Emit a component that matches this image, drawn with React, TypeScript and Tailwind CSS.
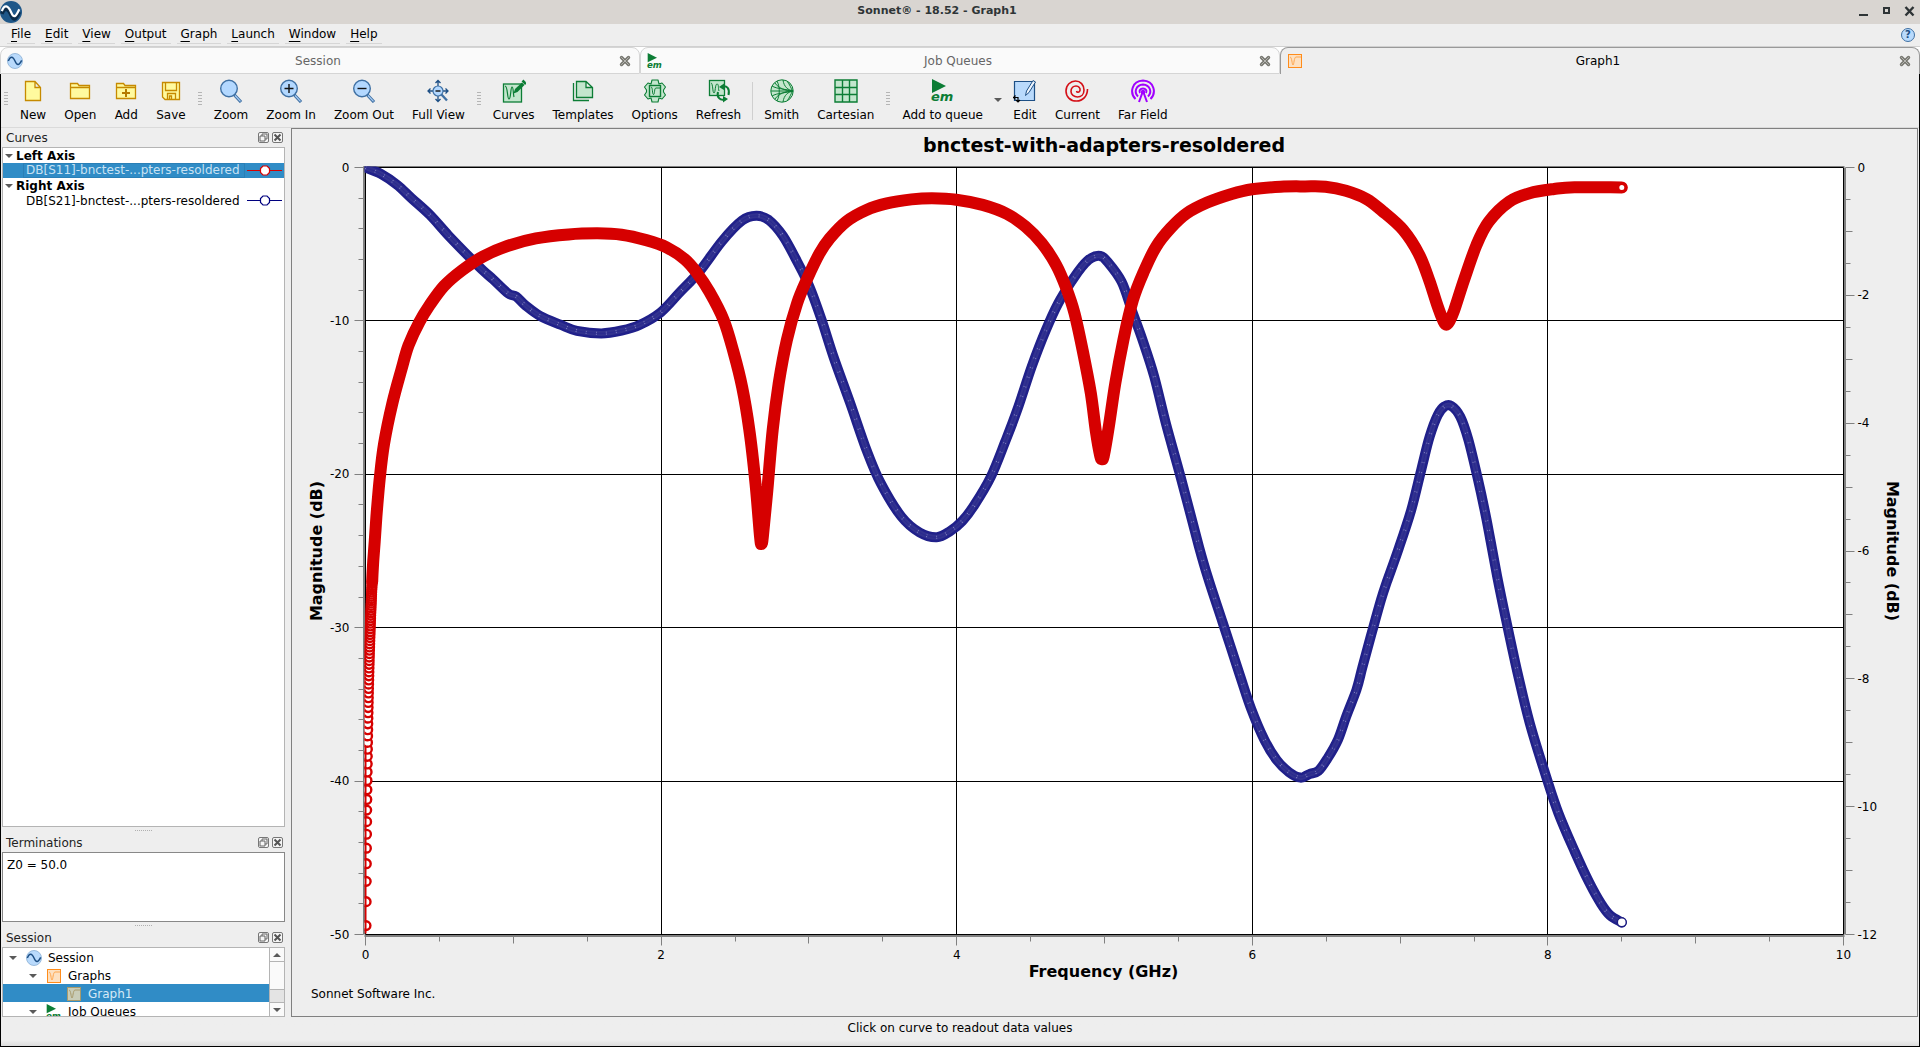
// App.tsx
import React from "react";

type Point = [number, number];

/* ---------- measured data ---------- */

// S11, left axis (GHz, dB)
const S11: Point[] = [
  [0.045, -27.0], [0.053, -25.6], [0.062, -24.4], [0.076, -22.5], [0.096, -20.3], [0.126, -18.0],
  [0.181, -15.4], [0.242, -13.2], [0.291, -11.6], [0.366, -10.05], [0.435, -8.96], [0.532, -7.72],
  [0.656, -6.68], [0.794, -5.81], [0.96, -5.12], [1.153, -4.62], [1.374, -4.36], [1.567, -4.29],
  [1.733, -4.38], [1.899, -4.73], [2.037, -5.2], [2.161, -5.99], [2.244, -6.9], [2.327, -8.1],
  [2.423, -9.94], [2.492, -12.1], [2.548, -14.3], [2.597, -17.1], [2.639, -20.6], [2.67, -24.1],
  [2.679, -24.5], [2.688, -24.1], [2.719, -21], [2.755, -17.1], [2.796, -14.07], [2.851, -11.24],
  [2.92, -8.85], [2.99, -7.22], [3.072, -5.6], [3.141, -4.62], [3.252, -3.53], [3.39, -2.77],
  [3.528, -2.34], [3.694, -2.08], [3.832, -2.01], [3.997, -2.1], [4.176, -2.44], [4.341, -3.03],
  [4.466, -3.86], [4.576, -4.94], [4.673, -6.36], [4.742, -7.88], [4.797, -9.5], [4.852, -11.9],
  [4.907, -14.7], [4.943, -17.3], [4.971, -18.8], [4.983, -19.0], [4.995, -18.8], [5.026, -17.1],
  [5.073, -14.07], [5.128, -11.24], [5.192, -8.64], [5.266, -6.79], [5.349, -5.16], [5.446, -3.97],
  [5.556, -2.99], [5.695, -2.29], [5.86, -1.73], [5.998, -1.42], [6.192, -1.25], [6.357, -1.23],
  [6.495, -1.25], [6.633, -1.51], [6.772, -2.05], [6.88, -2.84], [7.02, -4.07], [7.13, -5.7],
  [7.2, -7.44], [7.255, -9.07], [7.295, -10.05], [7.313, -10.25], [7.332, -10.05], [7.366, -9.3],
  [7.434, -7.3], [7.517, -5.05], [7.6, -3.53], [7.738, -2.23], [7.876, -1.68], [8.042, -1.4],
  [8.18, -1.29], [8.5, -1.3],
];

// S21, right axis (GHz, dB)
const S21: Point[] = [
  [0, 0], [0.104, -0.1], [0.214, -0.27], [0.311, -0.48], [0.435, -0.74], [0.56, -1.06],
  [0.711, -1.42], [0.794, -1.61], [0.863, -1.75], [0.965, -1.97], [1.02, -2.02], [1.084, -2.16],
  [1.18, -2.32], [1.319, -2.46], [1.43, -2.555], [1.595, -2.595], [1.733, -2.55], [1.857, -2.46],
  [1.995, -2.27], [2.12, -1.97], [2.258, -1.63], [2.41, -1.16], [2.548, -0.83], [2.644, -0.755],
  [2.727, -0.82], [2.824, -1.07], [2.92, -1.47], [3.003, -1.86], [3.086, -2.385], [3.169, -2.98],
  [3.28, -3.69], [3.39, -4.42], [3.486, -4.94], [3.625, -5.46], [3.749, -5.71], [3.865, -5.785],
  [3.955, -5.69], [4.038, -5.53], [4.12, -5.28], [4.231, -4.84], [4.328, -4.29], [4.41, -3.79],
  [4.507, -3.12], [4.604, -2.54], [4.687, -2.125], [4.783, -1.76], [4.852, -1.54], [4.907, -1.42],
  [4.971, -1.385], [5.018, -1.47], [5.115, -1.785], [5.184, -2.23], [5.253, -2.67], [5.336, -3.27],
  [5.418, -4.03], [5.515, -4.84], [5.639, -5.93], [5.7, -6.42], [5.8, -7.12], [5.917, -7.95],
  [5.994, -8.48], [6.083, -8.96], [6.165, -9.27], [6.248, -9.46], [6.326, -9.546], [6.386, -9.49],
  [6.447, -9.44], [6.51, -9.24], [6.58, -8.95], [6.635, -8.59], [6.704, -8.175], [6.745, -7.82],
  [6.801, -7.34], [6.87, -6.77], [6.911, -6.48], [6.992, -5.95], [7.075, -5.36], [7.144, -4.72],
  [7.2, -4.21], [7.255, -3.87], [7.3, -3.74], [7.346, -3.73], [7.407, -3.9], [7.462, -4.26],
  [7.523, -4.84], [7.572, -5.36], [7.61, -5.82], [7.657, -6.4], [7.717, -7.08], [7.795, -7.91],
  [7.878, -8.7], [7.988, -9.53], [8.071, -10.1], [8.181, -10.7], [8.278, -11.18], [8.36, -11.52],
  [8.42, -11.7], [8.499, -11.81],
];

/* ---------- chart geometry ---------- */

const PLOT_W = 1478;
const PLOT_H = 767;
const px = (f: number) => (f / 10) * PLOT_W;
const yLeft = (db: number) => (-db / 50) * PLOT_H;
const yRight = (db: number) => (-db / 12) * PLOT_H;

// Catmull-Rom through the samples
function smooth(points: Point[], y: (db: number) => number) {
  const p = points.map(([f, db]) => [px(f), y(db)]);
  let d = `M${p[0][0].toFixed(1)} ${p[0][1].toFixed(1)}`;
  for (let i = 0; i < p.length - 1; i++) {
    const a = p[i - 1] ?? p[i];
    const b = p[i];
    const c = p[i + 1];
    const e = p[i + 2] ?? c;
    const pts = [
      b[0] + (c[0] - a[0]) / 6, b[1] + (c[1] - a[1]) / 6,
      c[0] - (e[0] - b[0]) / 6, c[1] - (e[1] - b[1]) / 6,
      c[0], c[1],
    ];
    d += "C" + pts.map((n) => n.toFixed(1)).join(" ");
  }
  return d;
}

const range = (n: number) => Array.from({ length: n }, (_, i) => i);

const LOW_SAMPLES: Point[] = range(63)
  .map((i) => 0.0034 + i * 0.00067)
  .map((f) => [f, 20 * Math.log10(f) - 0.05]);

function Chart() {
  const s11 = smooth(S11, yLeft);
  const s21 = smooth(S21, yRight);
  return (
    <svg viewBox="0 0 1625 887" className="block h-full w-full" role="img" aria-label="S-parameter graph"
      fontFamily="'DejaVu Sans', sans-serif" fontSize="12">
      <text x="812" y="23" textAnchor="middle" fontWeight="bold" fontSize="19">bnctest-with-adapters-resoldered</text>
      <text x="19" y="869">Sonnet Software Inc.</text>
      <g transform="translate(73.5 38.5)">
        <clipPath id="plot"><rect x="-1" y="-1" width={PLOT_W + 1} height={PLOT_H} /></clipPath>
        <rect width={PLOT_W} height={PLOT_H} fill="#fff" />
        {/* grid */}
        <g stroke="#000">
          {range(6).map((i) => <path key={`v${i}`} d={`M${Math.round(px(i * 2))} 0V${PLOT_H}`} />)}
          {range(6).map((i) => <path key={`h${i}`} d={`M0 ${Math.round(yLeft(-i * 10))}H${PLOT_W}`} />)}
        </g>
        {/* axis lines */}
        <g stroke="#808080" fill="none">
          <path d={`M-1.5 -1V${PLOT_H}`} strokeWidth="2" />
          <path d={`M-2 -1H${PLOT_W + 1}`} />
          <path d={`M${PLOT_W + 1.5} 0V${PLOT_H}`} strokeWidth="2" />
          <path d={`M-1 ${PLOT_H + 1.5}H${PLOT_W + 1}`} strokeWidth="2" />
          {range(26).map((i) => (
            <path key={`l${i}`} d={`M-2 ${Math.round(yLeft(-i * 2))}H${i % 5 ? -7 : -11}`} />
          ))}
          {range(25).map((i) => (
            <path key={`r${i}`} d={`M${PLOT_W + 2} ${Math.round(yRight(-i / 2))}h${i % 4 === 0 ? 9 : i % 2 === 0 ? 7 : 5}`} />
          ))}
          {range(21).map((i) => (
            <path key={`b${i}`} d={`M${Math.round(px(i / 2))} ${PLOT_H + 2}v${i % 4 === 0 ? 9 : i % 2 === 0 ? 7 : 5}`} />
          ))}
        </g>
        {/* tick labels */}
        {range(6).map((i) => (
          <text key={i} x="-16" y={yLeft(-i * 10) + 4} textAnchor="end">{i ? -i * 10 : 0}</text>
        ))}
        {range(7).map((i) => (
          <text key={i} x={PLOT_W + 14} y={yRight(-i * 2) + 4}>{i ? -i * 2 : 0}</text>
        ))}
        {range(6).map((i) => (
          <text key={i} x={px(i * 2)} y={PLOT_H + 24} textAnchor="middle">{i * 2}</text>
        ))}
        <g fontWeight="bold" fontSize="16" textAnchor="middle">
          <text x={PLOT_W / 2 - 1} y={PLOT_H + 42}>Frequency (GHz)</text>
          <text transform={`translate(-44 ${PLOT_H / 2}) rotate(-90)`}>Magnitude (dB)</text>
          <text transform={`translate(${PLOT_W + 43} ${PLOT_H / 2}) rotate(90)`}>Magnitude (dB)</text>
        </g>
        {/* curves */}
        <g clipPath="url(#plot)" fill="none" strokeLinejoin="round" strokeLinecap="round">
          <path d={s21} stroke="#20208a" strokeWidth="10" />
          <path d={s21} stroke="#32328f" strokeWidth="5" />
          <path d={s21} stroke="#7f7fc0" strokeWidth="3" strokeDasharray="1 9" strokeLinecap="butt" />
          <path d={s21} stroke="#2a2a8e" />
          <g stroke="#d60000" strokeWidth="2" fill="#fff">
            {LOW_SAMPLES.map(([f, db]) => (
              <circle key={f} cx={px(f)} cy={yLeft(db)} r="4.4" strokeWidth="2.4" />
            ))}
            <path d={`M0 ${PLOT_H}V580`} />
          </g>
          <path d={s11} stroke="#d60000" strokeWidth="12" />
        </g>
        <circle cx={px(8.5)} cy={yLeft(-1.3)} r="4" fill="#fff" stroke="#d60000" strokeWidth="3" />
        <circle cx={px(8.5)} cy={yRight(-11.81)} r="4.5" fill="#fff" stroke="#1c1c82" strokeWidth="1.5" />
      </g>
    </svg>
  );
}

/* ---------- icons ---------- */

function Svg({ children, className = "size-6", box = 24 }: { children: React.ReactNode; className?: string; box?: number }) {
  return (
    <svg viewBox={`0 0 ${box} ${box}`} className={`${className} shrink-0`} fill="none" aria-hidden>
      {children}
    </svg>
  );
}

const GREEN = "#0c7d35";
const MINT = "#c3e6cd";

const LogoIcon = () => (
  <Svg className="size-[22px]">
    <circle cx="12" cy="12" r="12" fill="#1f5788" />
    <path d="M2 14C5 6 9 8 12 15S17 21 21 12" stroke="#0c2b48" strokeWidth="4" />
    <path d="M2 11C5 3 9 5 12 12S17 18 21 9" stroke="#fff" strokeWidth="2.4" />
  </Svg>
);
const SessionIcon = () => (
  <Svg className="size-4">
    <circle cx="12" cy="12" r="11.3" fill="#b9dafc" stroke="#7aa3cc" />
    <path d="M2 12C5 4 9 5 12 12S18 19 22 11" stroke="#1d4f85" strokeWidth="2.2" />
  </Svg>
);
const GraphIcon = ({ muted = false }: { muted?: boolean }) => (
  <Svg className="size-4" box={16}>
    <rect x="1.5" y="1.5" width="13" height="13" fill={muted ? "#c9cdb8" : "#fde0c0"} stroke={muted ? "#a89a6b" : "#ff8c1a"} />
    <path d="M3 4C5 4 5 12 6 12S7 4 9 4H14" stroke={muted ? "#a89a6b" : "#ffa64d"} />
  </Svg>
);
const EmIcon = ({ className = "size-4" }: { className?: string }) => (
  <Svg className={`${className} overflow-visible`}>
    <path d="M1 0L15 7L1 14Z" fill={GREEN} />
    <text x="0" y="22" fontFamily="'DejaVu Sans', sans-serif" fontStyle="italic" fontWeight="bold" fontSize="13" fill={GREEN}>em</text>
  </Svg>
);
const NewIcon = () => (
  <Svg><path d="M4.5 2.5H14L19.5 8.5V21.5H4.5ZM14 2.5V8.5H19.5" fill="#fffa9e" stroke="#c68a00" strokeWidth="1.3" /></Svg>
);
const Folder = ({ plus = false }: { plus?: boolean }) => (
  <Svg>
    <path d="M2.5 19.5V4.5H9.5L11 6.5H21.5V19.5ZM2.5 8.5H21.5" fill="#fffa9e" stroke="#c68a00" strokeWidth="1.3" />
    {plus && <path d="M12 10V18M8 14H16" stroke="#b57b00" strokeWidth="2" />}
  </Svg>
);
const SaveIcon = () => (
  <Svg>
    <path d="M3.5 3.5H20.5V20.5H6L3.5 18Z" fill="#fffa9e" stroke="#c68a00" strokeWidth="1.3" />
    <path d="M6.5 3.5V11.5H17.5V3.5M8.5 20.5V14.5H16.5V20.5M10.5 20V17H12.5V20" stroke="#c68a00" strokeWidth="1.3" />
  </Svg>
);
const Lens = ({ sign = "" }: { sign?: string }) => (
  <Svg>
    <path d="M15 15.5L22 23" stroke="#3f70a3" strokeWidth="3.2" />
    <path d="M16 16.5L21.5 22.3" stroke="#a9cdf5" strokeWidth="1.2" />
    <circle cx="10" cy="9.5" r="8.3" fill="#b3d8ff" stroke="#3f70a3" strokeWidth="1.4" />
    {sign && <path d={sign} stroke="#111" strokeWidth="1.4" />}
  </Svg>
);
const FullViewIcon = () => (
  <Svg>
    <path d="M12 7V1.5M9.5 4L12 1.5L14.5 4M12 17V22.5M9.5 20L12 22.5L14.5 20M7 12H2M4.5 9.5L2 12L4.5 14.5M17 12H22M19.5 9.5L22 12L19.5 14.5" stroke="#1d4f85" strokeWidth="1.3" />
    <path d="M15 15L21 21.5" stroke="#3f70a3" strokeWidth="2.4" />
    <circle cx="12" cy="12" r="5" fill="#b3d8ff" stroke="#3f70a3" strokeWidth="1.2" />
    <path d="M9.5 12H14.5" stroke="#111" strokeWidth="1.4" />
  </Svg>
);
const CurvesIcon = () => (
  <Svg>
    <rect x="1.5" y="5" width="18" height="18" fill={MINT} stroke={GREEN} strokeWidth="1.3" />
    <path d="M3 7C6 7 5 20 7 20S8.5 8 10 8S11 14 12 18" stroke={GREEN} strokeWidth="1.2" />
    <path d="M11.5 14.5L13 10L20 3.5L22.5 6L15.5 13Z" fill={GREEN} />
    <path d="M20.5 1.5L24 5" stroke={GREEN} strokeWidth="2.6" />
  </Svg>
);
const TemplatesIcon = () => (
  <Svg>
    <path d="M2.5 4V21.5H18" stroke={GREEN} strokeWidth="1.3" />
    <path d="M5.5 2.5H15L21.5 8.5V18.5H5.5ZM15 2.5V8.5H21.5" fill={MINT} stroke={GREEN} strokeWidth="1.3" />
  </Svg>
);
const OptionsIcon = () => (
  <Svg>
    <path d="M9 1H15L16 5L19 4L22.5 8L20.5 11V13L22.5 16L19 20L16 19L15 23H9L8 19L5 20L1.5 16L3.5 13V11L1.5 8L5 4L8 5Z" fill={MINT} stroke={GREEN} strokeLinejoin="round" strokeWidth="1.1" />
    <rect x="6.5" y="6.5" width="11" height="11" stroke={GREEN} strokeWidth="1.4" />
    <path d="M8 8C10 8 9 15.5 10.5 15.5S11 9 13 9H17" stroke={GREEN} />
  </Svg>
);
const RefreshIcon = () => (
  <Svg>
    <rect x="2.5" y="1.5" width="15" height="15" fill={MINT} stroke={GREEN} strokeWidth="1.3" />
    <path d="M4 4C6 4 5.5 14 7 14S8 5 10 5S11 9 12 12" stroke={GREEN} />
    <path d="M15 7.5C20 6 23 10 21.5 16" stroke={GREEN} strokeWidth="2" />
    <path d="M12 8L17 4.5V11Z" fill={GREEN} />
    <path d="M18 20.5C13 22 9.5 18 11 13" stroke={GREEN} strokeWidth="2" />
    <path d="M21 20L16 17V23.5Z" fill={GREEN} />
  </Svg>
);
const SmithIcon = () => (
  <Svg>
    <circle cx="12" cy="12" r="11.2" fill={MINT} stroke={GREEN} />
    <path d="M1 12H23M23 12C18 11 14 8 13 1M23 12C16 12 8 9 5 4M23 12C18 13 14 16 13 23M23 12C16 12 8 15 5 20M23 12C15 10 7 10 2 7M23 12C15 14 7 14 2 17M7 2C10 8 10 16 7 22M17 2C20 6 21 9 22 11M17 22C20 18 21 15 22 13" stroke={GREEN} />
  </Svg>
);
const CartesianIcon = () => (
  <Svg>
    <rect x="1" y="1" width="22" height="22" fill={MINT} />
    <path d="M1 1H23V23H1ZM8.5 1V23M15.5 1V23M1 8.5H23M1 15.5H23" stroke={GREEN} strokeWidth="1.4" />
  </Svg>
);
const EditIcon = () => (
  <Svg>
    <path d="M1.5 2.5H21.5V21.5H1.5Z" fill="#b9dafc" stroke="#1d4f85" strokeWidth="1.2" />
    <path d="M12.5 16.5L13.5 12L20 1.5L22.5 3L16 13.5Z" fill="#eef5fd" stroke="#1d4f85" />
    <path d="M0 18.5H5V23M2.5 16.5L0.5 18.5L2.5 20.5M3 21L5 23L7 21" stroke="#000" strokeWidth="1.2" />
  </Svg>
);
const CurrentIcon = () => (
  <Svg>
    <path d="M22.5 10C22.5 17 18 22 11.5 22C5 22 1 17.5 1 12C1 6 5.5 2 10.5 2C15.5 2 19 6 19 11C19 15.5 16 18 12.5 18C9 18 6 15.5 6 12.5C6 9 8.5 7 11 7C14 7 15.5 9.5 15 11.5C14.5 13.5 12 14 11.5 12" stroke="#d40f17" strokeWidth="1.6" />
  </Svg>
);
const FarFieldIcon = () => (
  <Svg>
    <g stroke="#a100ff" strokeWidth="2">
      <path d="M4.5 20C-1.5 14 0.5 2 12 1.5C23.5 2 25.5 14 19.5 20" />
      <path d="M7 17.5C2.5 13 5 6 12 5.5C19 6 21.5 13 17 17.5" />
      <path d="M9 14C7.5 11.5 9.5 9.5 12 9.5S16.5 11.5 15 14" />
      <path d="M12 12L8 23M12 12L16 23" />
    </g>
    <circle cx="12" cy="13" r="2.2" fill="#a100ff" />
  </Svg>
);

const Arrow = ({ up = false }: { up?: boolean }) => (
  <svg viewBox="0 0 8 4" className="h-1 w-2 shrink-0" aria-hidden>
    <path d={up ? "M0 4H8L4 0Z" : "M0 0H8L4 4Z"} fill="#5a5a5a" />
  </svg>
);

const CloseGlyph = () => (
  <svg viewBox="0 0 12 12" className="size-3" aria-hidden>
    <path d="M2.5 2.5L9.5 9.5M9.5 2.5L2.5 9.5" stroke="#777770" strokeWidth="3.4" strokeLinecap="round" />
    <path d="M2.5 2.5L9.5 9.5M9.5 2.5L2.5 9.5" stroke="#b5b5b0" strokeLinecap="round" />
  </svg>
);

/* ---------- window chrome ---------- */

function TitleBar() {
  return (
    <header className="flex h-6 items-center bg-[#d9d5d1]">
      <LogoIcon />
      <h1 className="flex-1 pb-0.5 text-center text-[11px] font-bold text-[#2e3436]">Sonnet® - 18.52 - Graph1</h1>
      <div className="flex w-[68px] items-center justify-end gap-3 pr-[5px] pb-px">
        <button aria-label="Minimize"><Svg className="size-[11px]" box={11}><path d="M1 9H10" stroke="#2e3436" strokeWidth="2" /></Svg></button>
        <button aria-label="Maximize"><Svg className="size-[11px]" box={11}><path d="M3 2H8V7H3Z" stroke="#2e3436" strokeWidth="2" /></Svg></button>
        <button aria-label="Close"><Svg className="size-[11px]" box={11}><path d="M1.5 1L9.5 9.5M9.5 1L1.5 9.5" stroke="#2e3436" strokeWidth="2.4" /></Svg></button>
      </div>
    </header>
  );
}

const MENUS = ["File", "Edit", "View", "Output", "Graph", "Launch", "Window", "Help"];

function MenuBar() {
  return (
    <nav className="flex h-[23px] items-start gap-1.5 border-b border-[#d0d0d0] pl-[7px] pr-[5px]">
      {MENUS.map((m) => (
        <button key={m} className="h-5 border-b border-[#d6d6d6] px-1">
          <span className="underline underline-offset-[3px]">{m[0]}</span>{m.slice(1)}
        </button>
      ))}
      <button aria-label="Help" className="ml-auto mt-1 grid size-3.5 place-items-center rounded-full border border-[#3f70a3] bg-[#b9dafc] text-[10px] font-bold leading-none text-[#1d4f85]">?</button>
    </nav>
  );
}

function Tab({ icon, title, active = false }: { icon: React.ReactNode; title: string; active?: boolean }) {
  return (
    <div className={`flex flex-1 items-center rounded-t-lg border-x border-t pl-1.5 pr-2 ${
      active ? "border-[#999] bg-[#eee] text-black" : "border-b border-[#d5d5d5] bg-[#fafafa] text-[#666]"
    }`}>
      {icon}
      <button role="tab" aria-selected={active} className="flex-1">{title}</button>
      <button aria-label={`Close ${title}`} className="ml-1.5"><CloseGlyph /></button>
    </div>
  );
}

const Handle = () => (
  <div className="mx-[3px] mt-[17px] h-4 w-1 shrink-0 bg-[radial-gradient(circle,#b5b5b5_40%,transparent_60%)] bg-[length:2px_3px]" />
);

function Tool({ icon, label }: { icon: React.ReactNode; label: string }) {
  return (
    <button className="flex flex-col items-center gap-1 whitespace-nowrap px-[9px] pt-[5px]">
      {icon}
      <span className="leading-4">{label}</span>
    </button>
  );
}

function ToolBar() {
  return (
    <div className="flex h-[54px] items-start overflow-hidden border-b border-[#dadada]" role="toolbar">
      <Handle />
      <Tool icon={<NewIcon />} label="New" />
      <Tool icon={<Folder />} label="Open" />
      <Tool icon={<Folder plus />} label="Add" />
      <Tool icon={<SaveIcon />} label="Save" />
      <Handle />
      <Tool icon={<Lens />} label="Zoom" />
      <Tool icon={<Lens sign="M10 5V14M5.5 9.5H14.5" />} label="Zoom In" />
      <Tool icon={<Lens sign="M5.5 9.5H14.5" />} label="Zoom Out" />
      <Tool icon={<FullViewIcon />} label="Full View" />
      <Handle />
      <Tool icon={<CurvesIcon />} label="Curves" />
      <Tool icon={<TemplatesIcon />} label="Templates" />
      <Tool icon={<OptionsIcon />} label="Options" />
      <Tool icon={<RefreshIcon />} label="Refresh" />
      <div className="mx-0.5 mt-2 h-[38px] w-px bg-[#cfcfcf]" />
      <Tool icon={<SmithIcon />} label="Smith" />
      <Tool icon={<CartesianIcon />} label="Cartesian" />
      <Handle />
      <Tool icon={<EmIcon className="size-6" />} label="Add to queue" />
      <button aria-label="Queue options" className="mx-0.5 mt-6"><Arrow /></button>
      <Tool icon={<EditIcon />} label="Edit" />
      <Tool icon={<CurrentIcon />} label="Current" />
      <Tool icon={<FarFieldIcon />} label="Far Field" />
    </div>
  );
}

/* ---------- docks ---------- */

function DockHeader({ title }: { title: string }) {
  const box = "grid size-[11px] place-items-center rounded-[2px] border border-[#777] bg-[#f6f6f6]";
  return (
    <div className="flex h-[19px] items-center gap-[3px] pl-1 pr-0.5 text-[#222]">
      <h2 className="flex-1">{title}</h2>
      <button className={box} aria-label={`Float ${title}`}>
        <Svg className="size-[9px]" box={9}><path d="M1 3H6V8H1ZM3 3V1H8V6H6" stroke="#666" /></Svg>
      </button>
      <button className={box} aria-label={`Close ${title}`}>
        <Svg className="size-[9px]" box={9}><path d="M1.5 1.5L7.5 7.5M7.5 1.5L1.5 7.5" stroke="#555" strokeWidth="2" /></Svg>
      </button>
    </div>
  );
}

const Splitter = () => (
  <div className="flex h-1.5 items-center justify-center">
    <div className="w-[17px] border-t border-dotted border-[#b0b0b0]" />
  </div>
);

const CurveSwatch = ({ color }: { color: string }) => (
  <svg viewBox="0 0 35 11" className="ml-auto mr-0.5 h-[11px] w-[35px] shrink-0" aria-hidden>
    <path d="M0 5.5H35" stroke={color} />
    <path d="M16 1H20L22.500 3.500V7.500L20 10H16L13.500 7.500V3.500Z" fill="#fff" stroke={color} strokeWidth="1.2" />
  </svg>
);

function AxisRow({ label }: { label: string }) {
  return (
    <div className="flex h-[15px] items-center gap-[3px] pl-0.5 font-bold" role="treeitem">
      <Arrow />{label}
    </div>
  );
}

function Sidebar() {
  return (
    <aside className="flex w-[283px] shrink-0 flex-col">
      <DockHeader title="Curves" />
      <div className="flex-1 whitespace-nowrap border border-[#b4b4b4] bg-white" role="tree" aria-label="Curves">
        <AxisRow label="Left Axis" />
        <div className="flex h-[15px] items-center bg-[#308cc6] pl-5 text-[#c9e2f3]" role="treeitem" aria-selected>
          <span className="border border-[#2a7fb6] pl-0.5 pr-1 leading-[13px]">DB[S11]-bnctest-...pters-resoldered</span>
          <CurveSwatch color="#d60000" />
        </div>
        <AxisRow label="Right Axis" />
        <div className="flex h-[15px] items-center pl-[23px]" role="treeitem">
          DB[S21]-bnctest-...pters-resoldered
          <CurveSwatch color="#00007f" />
        </div>
      </div>
      <Splitter />
      <DockHeader title="Terminations" />
      <textarea readOnly aria-label="Terminations" defaultValue="Z0 = 50.0"
        className="block h-[70px] resize-none border border-[#888] bg-white px-1 py-[3px] outline-none" />
      <Splitter />
      <DockHeader title="Session" />
      <div className="flex h-[70px] border border-[#b4b4b4] bg-white">
        <div className="flex-1 overflow-hidden" role="tree" aria-label="Session">
          <div className="flex h-[18px] items-center pl-1.5 pt-0.5" role="treeitem">
            <Arrow /><span className="ml-[9px] mr-1.5"><SessionIcon /></span>Session
          </div>
          <div className="flex h-[18px] items-center pl-[26px] pt-0.5" role="treeitem">
            <Arrow /><span className="ml-[9px] mr-1.5"><GraphIcon /></span>Graphs
          </div>
          <div className="flex h-[18px] items-center bg-[#308cc6] pl-[63px] pt-0.5 text-[#d5e9f6]" role="treeitem" aria-selected>
            <span className="mr-1.5"><GraphIcon muted /></span>Graph1
          </div>
          <div className="flex h-[18px] items-center pl-[26px] pt-0.5" role="treeitem">
            <Arrow /><span className="ml-[9px] mr-1.5"><EmIcon /></span>Job Queues
          </div>
        </div>
        <div className="flex w-[15px] flex-col border-l border-[#b4b4b4] bg-[#fafafa]">
          <button aria-label="Scroll up" className="grid h-3.5 place-items-center border-b border-[#b4b4b4]"><Arrow up /></button>
          <div className="flex-1" />
          <div className="h-3.5 border-y border-[#b4b4b4] bg-[#e4e4e4]" />
          <button aria-label="Scroll down" className="grid h-[13px] place-items-center"><Arrow /></button>
        </div>
      </div>
    </aside>
  );
}

export default function App() {
  return (
    <div className="flex min-h-screen flex-col bg-[#eee] font-['DejaVu_Sans',sans-serif] text-xs leading-[18px] text-black">
      <TitleBar />
      <MenuBar />
      <div className="flex h-[27px] bg-white" role="tablist">
        <Tab icon={<SessionIcon />} title="Session" />
        <Tab icon={<EmIcon />} title="Job Queues" />
        <Tab icon={<GraphIcon />} title="Graph1" active />
      </div>
      <div className="flex flex-1 flex-col border-x border-b border-black">
        <ToolBar />
        <main className="flex flex-1 gap-1.5 pl-px pr-px">
          <Sidebar />
          <section className="min-w-0 flex-1 border border-[#808080]">
            <Chart />
          </section>
        </main>
        <footer className="flex h-[29px] items-start justify-center bg-gradient-to-b from-[#eee] from-80% to-[#dcdcdc] pt-[2px]">
          Click on curve to readout data values
        </footer>
      </div>
    </div>
  );
}
